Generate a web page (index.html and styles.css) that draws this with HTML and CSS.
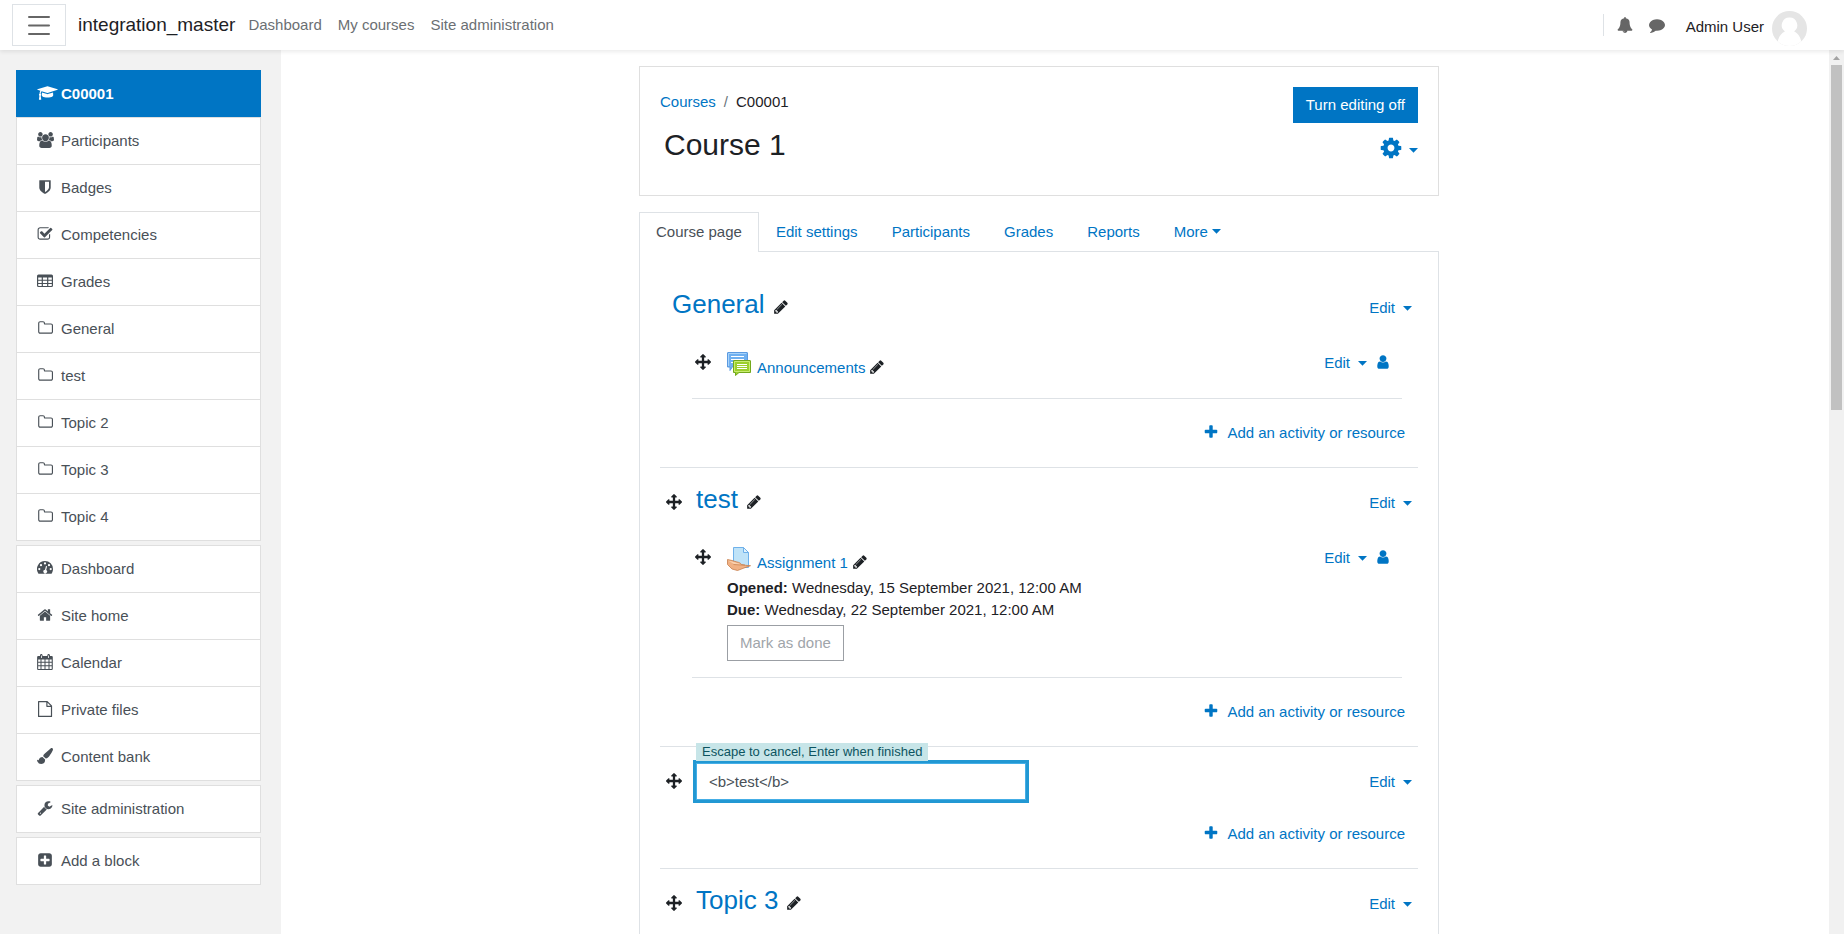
FILE: index.html
```html
<!DOCTYPE html>
<html lang="en">
<head>
<meta charset="utf-8">
<title>Course: Course 1</title>
<link rel="stylesheet" href="styles.css">
</head>
<body>
<svg class="sprite" aria-hidden="true">
  <symbol id="move" viewBox="0 0 1792 1792"><path d="M1792 896q0 26-19 45l-256 256q-19 19-45 19t-45-19-19-45v-128h-384v384h128q26 0 45 19t19 45-19 45l-256 256q-19 19-45 19t-45-19l-256-256q-19-19-19-45t19-45 45-19h128v-384h-384v128q0 26-19 45t-45 19-45-19l-256-256q-19-19-19-45t19-45l256-256q19-19 45-19t45 19 19 45v128h384v-384h-128q-26 0-45-19t-19-45 19-45l256-256q19-19 45-19t45 19l256 256q19 19 19 45t-19 45-45 19h-128v384h384v-128q0-26 19-45t45-19 45 19l256 256q19 19 19 45z"/></symbol>
  <symbol id="pencil" viewBox="0 0 1792 1792"><path d="M491 1536l91-91-235-235-91 91v107h128v128h107zm523-928q0-22-22-22-10 0-17 7l-542 542q-7 7-7 17 0 22 22 22 10 0 17-7l542-542q7-7 7-17zm-54-192l416 416-832 832h-416v-416zm683 96q0 53-37 90l-166 166-416-416 166-165q36-38 90-38 53 0 91 38l235 234q37 39 37 91z"/></symbol>
  <symbol id="plus" viewBox="0 0 1792 1792"><path d="M1600 736v192q0 40-28 68t-68 28h-416v416q0 40-28 68t-68 28h-192q-40 0-68-28t-28-68v-416h-416q-40 0-68-28t-28-68v-192q0-40 28-68t68-28h416v-416q0-40 28-68t68-28h192q40 0 68 28t28 68v416h416q40 0 68 28t28 68z"/></symbol>
  <symbol id="cog" viewBox="0 0 1792 1792"><path d="M1152 896q0-106-75-181t-181-75-181 75-75 181 75 181 181 75 181-75 75-181zm512-109v222q0 12-8 23t-20 13l-185 28q-19 54-39 91 35 50 107 138 10 12 10 25t-9 23q-27 37-99 108t-94 71q-12 0-26-9l-138-108q-44 23-91 38-16 136-29 186-7 28-36 28h-222q-14 0-24.500-8.500t-11.500-21.500l-28-184q-49-16-90-37l-141 107q-10 9-25 9-14 0-25-11-126-114-165-168-7-10-7-23 0-12 8-23 15-21 51-66.500t54-70.500q-27-50-41-99l-183-27q-13-2-21-12.500t-8-23.500v-222q0-12 8-23t19-13l186-28q14-46 39-92-40-57-107-138-10-12-10-24 0-10 9-23 26-36 98.500-107.500t94.500-71.500q13 0 26 10l138 107q44-23 91-38 16-136 29-186 7-28 36-28h222q14 0 24.500 8.500t11.500 21.500l28 184q49 16 90 37l142-107q9-9 24-9 13 0 25 10 129 119 165 170 7 8 7 22 0 12-8 23-15 21-51 66.500t-54 70.500q26 50 41 98l183 28q13 2 21 12.500t8 23.500z"/></symbol>
  <symbol id="user" viewBox="0 0 1792 1792"><path d="M1536 1399q0 109-62.500 187t-150.500 78h-854q-88 0-150.500-78t-62.500-187q0-85 8.500-160.500t31.500-152 58.500-131 94-89 134.500-34.500q131 128 313 128t313-128q76 0 134.500 34.500t94 89 58.500 131 31.500 152 8.500 160.500zm-256-887q0 159-112.500 271.500t-271.500 112.500-271.500-112.500-112.500-271.500 112.500-271.500 271.500-112.500 271.500 112.500 112.500 271.500z"/></symbol>
  <symbol id="home" viewBox="0 0 1792 1792"><path d="M1472 992v480q0 26-19 45t-45 19h-384v-384h-256v384h-384q-26 0-45-19t-19-45v-480q0-1 .5-3t.5-3l575-474 575 474q1 2 1 6zm223-69l-62 74q-8 9-21 11h-3q-13 0-21-7l-692-577-692 577q-12 8-24 7-13-2-21-11l-62-74q-8-10-7-23.500t11-21.500l719-599q32-26 76-26t76 26l244 204v-195q0-14 9-23t23-9h192q14 0 23 9t9 23v408l219 182q10 8 11 21.500t-7 23.500z"/></symbol>
  <symbol id="comment" viewBox="0 0 1792 1792"><path d="M1792 896q0 174-120 321.500t-326 233-450 85.500q-70 0-145-8-198 175-460 242-49 14-114 22-17 2-30.500-9t-17.500-29v-1q-3-4-.5-12t2-10 4.500-9.500l6-9 7-8.500 8-9q7-8 31-34.500t34.500-38 31-39.500 32.500-51 27-59 26-76q-157-89-247.500-220t-90.500-281q0-174 120-321.500t326-233 450-85.500 450 85.500 326 233 120 321.500z"/></symbol>
  <symbol id="bell" viewBox="0 0 1792 1792"><path d="M912 1696q0-16-16-16-59 0-101.500-42.500t-42.500-101.500q0-16-16-16t-16 16q0 73 51.500 124.500t124.500 51.500q16 0 16-16zm816-288q0 52-38 90t-90 38h-448q0 106-75 181t-181 75-181-75-75-181h-448q-52 0-90-38t-38-90q50-42 91-88t85-119.500 74.500-158.500 50-206 19.500-260q0-152 117-282.500t307-158.500q-8-19-8-39 0-40 28-68t68-28 68 28 28 68q0 20-8 39 190 28 307 158.500t117 282.500q0 139 19.500 260t50 206 74.500 158.500 85 119.500 91 88z"/></symbol>
  <symbol id="folder" viewBox="0 0 1792 1792"><path transform="translate(64 0)" d="M1600 1312v-704q0-40-28-68t-68-28h-704q-40 0-68-28t-28-68v-64q0-40-28-68t-68-28h-320q-40 0-68 28t-28 68v960q0 40 28 68t68 28h1216q40 0 68-28t28-68zm128-704v704q0 92-66 158t-158 66h-1216q-92 0-158-66t-66-158v-960q0-92 66-158t158-66h320q92 0 158 66t66 158v32h672q92 0 158 66t66 158z"/></symbol>
  <symbol id="plus-square" viewBox="0 0 1792 1792"><path d="M1408 960v-128q0-26-19-45t-45-19h-320v-320q0-26-19-45t-45-19h-128q-26 0-45 19t-19 45v320h-320q-26 0-45 19t-19 45v128q0 26 19 45t45 19h320v320q0 26 19 45t45 19h128q26 0 45-19t19-45v-320h320q26 0 45-19t19-45zm256-544v960q0 119-84.500 203.500t-203.500 84.500h-960q-119 0-203.500-84.500t-84.500-203.500v-960q0-119 84.500-203.500t203.500-84.500h960q119 0 203.500 84.500t84.500 203.500z"/></symbol>
  <symbol id="wrench" viewBox="0 0 1792 1792"><path d="M448 1472q0-26-19-45t-45-19-45 19-19 45 19 45 45 19 45-19 19-45zm644-420l-682 682q-37 37-90 37-52 0-91-37l-106-108q-38-36-38-90 0-53 38-91l681-681q39 98 114.500 173.500t173.500 114.500zm634-435q0 39-23 106-47 134-164.500 217.500t-258.500 83.500q-185 0-316.500-131.500t-131.500-316.500 131.500-316.500 316.500-131.500q58 0 121.500 16.500t107.500 46.500q16 11 16 28t-16 28l-293 169v224l193 107q5-3 79-48.500t135.500-81 70.500-35.500q15 0 23.500 10t8.500 25z"/></symbol>
  <symbol id="check" viewBox="0 0 1792 1792"><path d="M1472 930v318q0 119-84.500 203.500t-203.500 84.500h-832q-119 0-203.500-84.500t-84.500-203.500v-832q0-119 84.500-203.500t203.500-84.500h832q63 0 117 25 15 7 18 23 3 17-9 29l-49 49q-10 10-23 10-3 0-9-2-23-6-45-6h-832q-66 0-113 47t-47 113v832q0 66 47 113t113 47h832q66 0 113-47t47-113v-254q0-13 9-22l64-64q10-10 23-10 6 0 12 3 20 8 20 29zm231-489l-814 814q-24 24-57 24t-57-24l-430-430q-24-24-24-57t24-57l110-110q24-24 57-24t57 24l263 263 647-647q24-24 57-24t57 24l110 110q24 24 24 57t-24 57z"/></symbol>
  <symbol id="shield" viewBox="0 0 1792 1792"><path d="M1344 960v-640h-448v1137q119-63 213-137 235-184 235-360zm192-768v768q0 86-33.500 170.500t-83 150-118 127.500-126.500 103-121 77.500-89.500 49.500-42.500 20q-12 6-26 6t-26-6q-16-7-42.500-20t-89.500-49.500-121-77.500-126.500-103-118-127.500-83-150-33.500-170.500v-768q0-26 19-45t45-19h1152q26 0 45 19t19 45z"/></symbol>
  <symbol id="users" viewBox="0 0 1920 1792"><path d="M593 896q-162 5-265 128h-134q-82 0-138-40.500t-56-118.500q0-353 124-353 6 0 43.500 21t97.500 42.500 119 21.500q67 0 133-23-5 37-5 66 0 139 81 256zm1071 637q0 120-73 189.500t-194 69.500h-874q-121 0-194-69.500t-73-189.500q0-53 3.500-103.500t14-109 26.500-108.500 43-97.500 62-81 85.500-53.500 111.500-20q10 0 43 21.500t73 48 107 48 135 21.500 135-21.500 107-48 73-48 43-21.500q61 0 111.500 20t85.500 53.500 62 81 43 97.500 26.500 108.500 14 109 3.500 103.500zm-1024-1277q0 106-75 181t-181 75-181-75-75-181 75-181 181-75 181 75 75 181zm704 384q0 159-112.500 271.500t-271.500 112.500-271.500-112.500-112.500-271.500 112.500-271.500 271.500-112.500 271.500 112.500 112.500 271.500zm576 225q0 78-56 118.500t-138 40.500h-134q-103-123-265-128 81-117 81-256 0-29-5-66 66 23 133 23 59 0 119-21.500t97.500-42.500 43.500-21q124 0 124 353zm-128-609q0 106-75 181t-181 75-181-75-75-181 75-181 181-75 181 75 75 181z"/></symbol>
  <symbol id="cap" viewBox="0 0 2304 1792"><path d="M1774 836l18 316q4 69-82 128t-235 93.500-323 34.500-323-34.500-235-93.500-82-128l18-316 574 181q22 7 48 7t48-7zm530-324q0 23-22 31l-1120 352q-4 1-10 1t-10-1l-652-206q-43 34-71 111.500t-34 178.500q63 36 63 109 0 69-58 107l58 433q2 14-8 25-9 11-24 11h-192q-15 0-24-11-10-11-8-25l58-433q-58-38-58-107 0-73 65-111 11-207 98-330l-333-104q-22-8-22-31t22-31l1120-352q4-1 10-1t10 1l1120 352q22 8 22 31z"/></symbol>
  <symbol id="table" viewBox="0 0 16 16"><path fill-rule="evenodd" d="M1.500 1.500h13A1.500 1.500 0 0 1 16 3v9.500a1.500 1.500 0 0 1-1.500 1.500h-13A1.500 1.500 0 0 1 0 12.500V3a1.500 1.500 0 0 1 1.500-1.500zM1.200 4.500v2.200h3.500V4.500zm4.700 0v2.200h4.200V4.500zm5.400 0v2.200h3.500V4.500zM1.200 7.700v2.200h3.500V7.700zm4.700 0v2.200h4.200V7.700zm5.400 0v2.200h3.500V7.700zM1.200 10.900v1.700l.3.300h3.200v-2zm4.700 0v2h4.200v-2zm5.400 0v2h3.200l.3-.3v-1.700z"/></symbol>
  <symbol id="dash" viewBox="0 0 16 16"><path fill-rule="evenodd" d="M8 1a8 8 0 0 1 8 8c0 1.600-.5 3.100-1.300 4.400-.1.200-.3.300-.5.300H1.800c-.2 0-.4-.1-.5-.3A8 8 0 0 1 8 1zM2.300 8a1.100 1.100 0 1 0 0 2.200 1.100 1.100 0 0 0 0-2.200zM4 4.100a1.100 1.100 0 1 0 0 2.200 1.100 1.100 0 0 0 0-2.200zM8 2.300a1.100 1.100 0 1 0 0 2.200 1.100 1.100 0 0 0 0-2.200zM12 4.100a1.100 1.100 0 1 0 0 2.200 1.100 1.100 0 0 0 0-2.200zM13.700 8a1.100 1.100 0 1 0 0 2.200 1.100 1.100 0 0 0 0-2.200zM9 6l-1 3.800a1.800 1.800 0 1 0 1.200.3l.9-3.800z"/></symbol>
  <symbol id="calendar" viewBox="0 0 16 16"><path fill-rule="evenodd" d="M1.500 2H3v-.5C3 .7 3.500 0 4.300 0s1.300.7 1.300 1.500V2h4.700v-.5c0-.8.500-1.500 1.300-1.500S13 .7 13 1.500V2h1.500c.8 0 1.300.500 1.300 1.300v11.400c0 .7-.6 1.300-1.300 1.300h-13C.7 16 .1 15.400.1 14.700V3.300C.1 2.500.7 2 1.500 2zM4 1.400v2.500h.8V1.400zm7.200 0v2.500h.8V1.400zM1.200 5.600v2.200h2.300V5.600zm3.300 0v2.200h3V5.600zm4 0v2.200h3V5.600zm4 0v2.200h2.200V5.600zM1.200 8.700v2.600h2.300V8.700zm3.300 0v2.600h3V8.700zm4 0v2.600h3V8.700zm4 0v2.600h2.200V8.700zM1.200 12.200v2.700h2.300v-2.700zm3.300 0v2.700h3v-2.700zm4 0v2.700h3v-2.700zm4 0v2.700h2.200v-2.700z"/></symbol>
  <symbol id="file" viewBox="0 0 16 16"><path fill="none" stroke="currentColor" stroke-width="1.200" stroke-linejoin="round" d="M1.600.6h8.600l4.300 4.300v10.500H1.600zM9.900.8v4.500h4.500"/></symbol>
  <symbol id="brush" viewBox="0 0 16 16"><path d="M14.600 0c.8 0 1.400.600 1.400 1.300 0 .5-.2 1-.4 1.500-1.600 3-3.300 5.600-4.600 6.800-.7.600-1.400 1-2.200 1L6.200 8.200c0-.8.400-1.600 1.100-2.200L13.600.4c.3-.3.600-.4 1-.4zM5.500 9l2.600 2.500v.4C8.100 14.300 6.600 16 4.200 16 1.500 16 0 14 0 11.600c.2.100.9.700 1.200.7.200 0 .4-.2.500-.4C2.300 10 3.500 9.200 5.500 9z"/></symbol>
  <symbol id="caret" viewBox="0 0 9 5"><path d="M0 0h9L4.500 4.800z"/></symbol>
</svg>

<header class="navbar">
  <button class="drawer-toggle" aria-label="Side panel"><svg viewBox="0 0 22 20" width="22" height="20"><path d="M1 2h20M1 10.500h20M1 19h20" stroke="currentColor" stroke-width="2" stroke-linecap="round"/></svg></button>
  <a class="brand" href="#">integration_master</a>
  <nav class="primary-nav"><a href="#">Dashboard</a><a href="#">My courses</a><a href="#">Site administration</a></nav>
  <div class="tools">
    <button class="tool" aria-label="Notifications"><svg class="icon"><use href="#bell"/></svg></button>
    <button class="tool" aria-label="Messages"><svg class="icon"><use href="#comment"/></svg></button>
  </div>
  <button class="user-menu">Admin User
    <svg class="avatar" viewBox="0 0 35 35"><clipPath id="round"><circle cx="17.500" cy="17.500" r="17.500"/></clipPath><g clip-path="url(#round)"><path fill="#e5e5e5" d="M0 0h35v35H0z"/><path fill="#fff" d="M17.500 6.500a7.700 7.700 0 0 1 4.600 13.900c4.300 1.800 7.300 6.600 8 14.600H4.900c.7-8 3.700-12.800 8-14.600A7.700 7.700 0 0 1 17.500 6.500z"/></g></svg>
  </button>
</header>

<div class="page">
  <aside class="drawer">
    <nav class="nav-group">
      <a class="active" href="#"><span class="slot start"><svg class="icon wide"><use href="#cap"/></svg></span>C00001</a>
      <a href="#"><span class="slot"><svg class="icon people"><use href="#users"/></svg></span>Participants</a>
      <a href="#"><span class="slot"><svg class="icon"><use href="#shield"/></svg></span>Badges</a>
      <a href="#"><span class="slot"><svg class="icon"><use href="#check"/></svg></span>Competencies</a>
      <a href="#"><span class="slot"><svg class="icon"><use href="#table"/></svg></span>Grades</a>
      <a href="#"><span class="slot"><svg class="icon"><use href="#folder"/></svg></span>General</a>
      <a href="#"><span class="slot"><svg class="icon"><use href="#folder"/></svg></span>test</a>
      <a href="#"><span class="slot"><svg class="icon"><use href="#folder"/></svg></span>Topic 2</a>
      <a href="#"><span class="slot"><svg class="icon"><use href="#folder"/></svg></span>Topic 3</a>
      <a href="#"><span class="slot"><svg class="icon"><use href="#folder"/></svg></span>Topic 4</a>
    </nav>
    <nav class="nav-group">
      <a href="#"><span class="slot"><svg class="icon"><use href="#dash"/></svg></span>Dashboard</a>
      <a href="#"><span class="slot"><svg class="icon"><use href="#home"/></svg></span>Site home</a>
      <a href="#"><span class="slot"><svg class="icon"><use href="#calendar"/></svg></span>Calendar</a>
      <a href="#"><span class="slot"><svg class="icon"><use href="#file"/></svg></span>Private files</a>
      <a href="#"><span class="slot"><svg class="icon"><use href="#brush"/></svg></span>Content bank</a>
    </nav>
    <nav class="nav-group"><a href="#"><span class="slot"><svg class="icon"><use href="#wrench"/></svg></span>Site administration</a></nav>
    <nav class="nav-group"><a href="#"><span class="slot"><svg class="icon"><use href="#plus-square"/></svg></span>Add a block</a></nav>
  </aside>

  <main class="main">
    <div class="content">
      <div class="course-header">
        <div>
          <nav class="breadcrumb"><a href="#">Courses</a><span class="sep">/</span><span>C00001</span></nav>
          <h1>Course 1</h1>
        </div>
        <div class="header-actions">
          <button class="btn-primary">Turn editing off</button>
          <button class="settings" aria-label="Actions menu"><svg class="gear"><use href="#cog"/></svg><svg class="caret"><use href="#caret"/></svg></button>
        </div>
      </div>

      <nav class="tabs">
        <a class="current" href="#">Course page</a><a href="#">Edit settings</a><a href="#">Participants</a><a href="#">Grades</a><a href="#">Reports</a><a class="more" href="#">More<svg class="caret"><use href="#caret"/></svg></a>
      </nav>

      <div class="panel">
        <section class="topic first">
          <div class="topic-head">
            <h3><a href="#">General</a><button class="link dark" aria-label="Edit section name"><svg class="icon"><use href="#pencil"/></svg></button></h3>
            <button class="link edit">Edit<svg class="caret"><use href="#caret"/></svg></button>
          </div>
          <div class="activity">
            <button class="link dark drag" aria-label="Move"><svg class="icon"><use href="#move"/></svg></button>
            <div class="activity-body">
              <div class="activity-name">
                <svg class="mod" viewBox="0 0 24 24"><path fill="#6fb0f0" stroke="#5b9ae0" d="M1 .5h19q.5 0 .5.500v13H6l-3 4.500V15H.5V1q0-.5.5-.5z"/><path fill="none" stroke="#a8d3fa" d="M1.500 14V1.500h18"/><path stroke="#fff" d="M4 4.500h13M4 7.500h13M4 10.500h4"/><path fill="#9ccf2c" stroke="#73a81c" d="M7 8.500h16q.5 0 .5.500v11.500H12L8.500 23.500v-3h-2V9q0-.5.5-.5z"/><path fill="none" stroke="#c9ec70" d="M7.500 9.500h15v10h-15z"/><path stroke="#fff" d="M10 12.500h10M10 14.500h10M10 16.500h10"/></svg>
                <a href="#">Announcements</a><button class="link dark" aria-label="Edit title"><svg class="icon"><use href="#pencil"/></svg></button>
              </div>
            </div>
            <button class="link edit">Edit<svg class="caret"><use href="#caret"/></svg></button>
            <button class="link assign" aria-label="Assign roles"><svg class="icon"><use href="#user"/></svg></button>
          </div>
          <div class="add"><button class="link"><svg class="icon"><use href="#plus"/></svg>Add an activity or resource</button></div>
        </section>

        <section class="topic">
          <div class="topic-head">
            <button class="link dark" aria-label="Move section"><svg class="icon"><use href="#move"/></svg></button>
            <h3><a href="#">test</a><button class="link dark" aria-label="Edit section name"><svg class="icon"><use href="#pencil"/></svg></button></h3>
            <button class="link edit">Edit<svg class="caret"><use href="#caret"/></svg></button>
          </div>
          <div class="activity">
            <button class="link dark drag" aria-label="Move"><svg class="icon"><use href="#move"/></svg></button>
            <div class="activity-body">
              <div class="activity-name">
                <svg class="mod" viewBox="0 0 24 24"><path fill="#bfe3f8" stroke="#6fb1ea" d="M6.500.5h10l5 5v15h-15z"/><path fill="#e4f4fd" stroke="#6fb1ea" d="M16.500.5v5h5z"/><path fill="#f0b184" stroke="#c77f4c" stroke-width=".8" d="M.5 12.500l4.500 1 5 1.500c2 .3 3.500 1 4.500 2.500l4 .8 5 .4-6.500 2.300-6.500 2.500-5.500-1.500L.5 17.500z"/><path fill="#fad2b0" d="M1 13.500l4 1 5 1.500c1.500.3 2.500.8 3.500 1.700L7 17z"/><path fill="none" stroke="#c77f4c" stroke-width=".7" d="M6.500 17.500l7.500.500h4"/></svg>
                <a href="#">Assignment 1</a><button class="link dark" aria-label="Edit title"><svg class="icon"><use href="#pencil"/></svg></button>
              </div>
              <div><strong>Opened:</strong> Wednesday, 15 September 2021, 12:00 AM</div>
              <div><strong>Due:</strong> Wednesday, 22 September 2021, 12:00 AM</div>
              <button class="btn-outline">Mark as done</button>
            </div>
            <button class="link edit">Edit<svg class="caret"><use href="#caret"/></svg></button>
            <button class="link assign" aria-label="Assign roles"><svg class="icon"><use href="#user"/></svg></button>
          </div>
          <div class="add"><button class="link"><svg class="icon"><use href="#plus"/></svg>Add an activity or resource</button></div>
        </section>

        <section class="topic">
          <div class="topic-head editing">
            <button class="link dark" aria-label="Move section"><svg class="icon"><use href="#move"/></svg></button>
            <div class="inplace"><label for="section-name">Escape to cancel, Enter when finished</label><input id="section-name" type="text" value="&lt;b&gt;test&lt;/b&gt;"></div>
            <button class="link edit">Edit<svg class="caret"><use href="#caret"/></svg></button>
          </div>
          <div class="add"><button class="link"><svg class="icon"><use href="#plus"/></svg>Add an activity or resource</button></div>
        </section>

        <section class="topic">
          <div class="topic-head">
            <button class="link dark" aria-label="Move section"><svg class="icon"><use href="#move"/></svg></button>
            <h3><a href="#">Topic 3</a><button class="link dark" aria-label="Edit section name"><svg class="icon"><use href="#pencil"/></svg></button></h3>
            <button class="link edit">Edit<svg class="caret"><use href="#caret"/></svg></button>
          </div>
        </section>
      </div>
    </div>
  </main>

  <div class="scrollbar"><svg viewBox="0 0 15 15"><path fill="#a3a3a3" d="M4 10h7L7.500 6z"/></svg><div class="thumb"></div></div>
</div>
</body>
</html>
```
FILE: styles.css
```css
* { box-sizing: border-box; }

body {
  margin: 0;
  height: 100vh;
  overflow: hidden;
  display: flex;
  flex-direction: column;
  font: 15px/22px "Liberation Sans", Arial, sans-serif;
  color: #1d2125;
  background: #fff;
}

a { color: #0075c4; text-decoration: none; }
button { font: inherit; cursor: pointer; }
h1, h3 { margin: 0; font-weight: 400; }
svg { fill: currentColor; flex: none; }

.sprite { position: absolute; width: 0; height: 0; }
.icon { width: 16px; height: 16px; vertical-align: -2px; }
.icon.wide { width: 21px; }
.icon.people { width: 17px; }
.caret { width: 9px; height: 5px; }

/* Top bar */
.navbar {
  position: relative;
  z-index: 2;
  flex: none;
  display: flex;
  align-items: center;
  height: 50px;
  padding: 0 37px 0 12px;
  background: #fff;
  box-shadow: 0 2px 4px rgba(0, 0, 0, 0.08);
}
.drawer-toggle {
  display: flex;
  align-items: center;
  justify-content: center;
  width: 54px;
  height: 42px;
  padding: 0;
  border: 1px solid #dee2e6;
  background: #fff;
  color: #666;
}
.brand { margin-left: 12px; font-size: 19px; color: #1d2125; }
.primary-nav { display: flex; gap: 16px; margin-left: 13px; }
.primary-nav a { color: #6b6f73; }
.tools {
  display: flex;
  align-items: center;
  gap: 16px;
  height: 22px;
  margin-left: auto;
  padding-left: 13px;
  border-left: 1px solid #dee2e6;
}
.tool { display: flex; padding: 0; border: 0; background: none; color: #666; }
.user-menu {
  display: flex;
  gap: 8px;
  margin-left: 21px;
  padding: 7px 0 0;
  border: 0;
  background: none;
  color: #1d2125;
  line-height: 32px;
}
.avatar { width: 35px; height: 35px; }

/* Side drawer */
.page { flex: 1; display: flex; min-height: 0; }
.drawer {
  flex: none;
  display: flex;
  flex-direction: column;
  gap: 4px;
  width: 281px;
  padding: 20px 20px 0 16px;
  background: #f2f2f2;
}
.nav-group { border-bottom: 1px solid #dfdfdf; }
.nav-group a {
  display: flex;
  align-items: center;
  gap: 8px;
  padding: 12px 20px;
  border: 1px solid #dfdfdf;
  border-bottom: 0;
  background: #fff;
  color: #495057;
}
.nav-group .active {
  border-color: #0075c4;
  background: #0075c4;
  color: #fff;
  font-weight: 700;
}
.slot { display: flex; justify-content: center; width: 16px; padding-bottom: 2px; }
.slot.start { justify-content: flex-start; }

/* Main column */
.main { flex: 1; min-width: 0; padding: 16px 32px 0 0; overflow: hidden; }
.content { max-width: 800px; margin: 0 auto; }
.course-header {
  display: flex;
  justify-content: space-between;
  margin-bottom: 16px;
  padding: 20px 20px 32px;
  border: 1px solid #dfdfdf;
}
.breadcrumb { display: flex; gap: 8px; padding-top: 4px; }
.sep { color: #6a737b; }
h1 { margin-top: 14px; padding-left: 4px; font-size: 30px; line-height: 36px; }
.header-actions { display: flex; flex-direction: column; align-items: flex-end; gap: 13px; }
.btn-primary { height: 36px; padding: 0 13px; border: 0; background: #0075c4; color: #fff; }
.settings {
  display: flex;
  align-items: center;
  gap: 6px;
  padding: 0;
  border: 0;
  background: none;
  color: #0075c4;
}
.settings .caret { margin-top: 5px; }
.gear { width: 24px; height: 24px; }

.tabs { display: flex; }
.tabs a { padding: 8px 16px; border: 1px solid transparent; border-bottom: 0; }
.tabs .current {
  position: relative;
  margin-bottom: -1px;
  padding-bottom: 9px;
  border-color: #dee2e6;
  background: #fff;
  color: #495057;
}
.more .caret { margin-left: 4px; vertical-align: 3px; }
.panel { padding: 20px; border: 1px solid #dee2e6; }

/* Sections */
.topic { border-top: 1px solid #dee2e6; }
.topic.first { border-color: transparent; }
.topic-head {
  display: flex;
  align-items: baseline;
  gap: 14px;
  padding: 15px 6px 6px;
}
.first .topic-head { padding-left: 12px; }
.topic-head.editing { padding-top: 16px; padding-bottom: 0; }
h3 { font-size: 26px; line-height: 32px; }
h3 .link { margin-left: 8px; }
.link { padding: 0; border: 0; background: none; color: #0075c4; line-height: 22px; }
.dark { color: #1d2125; }
.edit { display: flex; align-items: center; gap: 8px; margin-left: auto; }

.activity {
  display: flex;
  align-items: flex-start;
  margin: 0 16px 0 32px;
  padding: 26px 11px 16px 3px;
  border-bottom: 1px solid #dee2e6;
}
.drag { margin-right: 16px; }
.mod { width: 24px; height: 24px; }
.activity-name { display: flex; align-items: flex-start; height: 30px; }
.activity-name a { padding: 5px 4px 0 6px; }
.activity-name .link { padding-top: 5px; }
.assign { margin-left: 8px; }
.btn-outline {
  height: 36px;
  margin-top: 4px;
  padding: 0 12px;
  border: 1px solid #9b9fa4;
  background: #fff;
  color: #a0a5aa;
}
.add { display: flex; justify-content: flex-end; padding: 23px 13px; }
.add .icon { margin-right: 8px; }

.inplace { position: relative; width: 330px; }
.inplace label {
  position: absolute;
  z-index: 1;
  top: -20px;
  left: 0;
  padding: 0 6px;
  background: #c7e5e8;
  color: #0c5460;
  font-size: 13px;
  line-height: 18px;
  white-space: nowrap;
}
.inplace input {
  display: block;
  width: 100%;
  height: 37px;
  padding: 0 12px;
  border: 1px solid #45aee6;
  background: #fff;
  color: #495057;
  font: inherit;
  box-shadow: 0 0 0 3px #2298d3;
}

.scrollbar { flex: none; width: 15px; background: #f1f1f1; }
.scrollbar svg { display: block; width: 15px; height: 15px; }
.thumb { height: 39%; margin: 0 2px; background: #c1c1c1; }
```
